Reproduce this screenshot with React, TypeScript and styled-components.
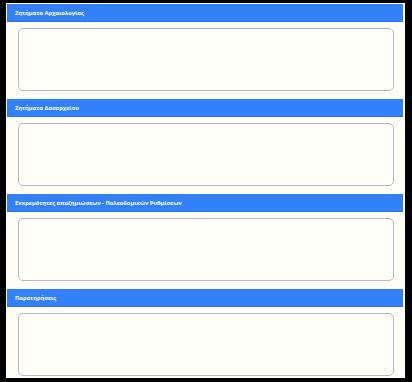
import styled, { createGlobalStyle } from "styled-components";

const GlobalStyle = createGlobalStyle`
  html, body {
    margin: 0;
    padding: 0;
    background: #000;
  }
  body {
    font-family: "Open Sans", "Noto Sans", sans-serif;
  }
`;

const sections = [
  "Ζητήματα Αρχαιολογίας",
  "Ζητήματα Δασαρχείου",
  "Εκκρεμότητες αποζημιώσεων - Πολεοδομικών Ρυθμίσεων",
  "Παρατηρήσεις",
];

const App = () => {
  return (
    <>
      <GlobalStyle />
      <Frame>
        <Page>
          {sections.map((title) => (
            <Section key={title}>
              <Header>{title}</Header>
              <Field>
                <TextBox />
              </Field>
            </Section>
          ))}
        </Page>
      </Frame>
    </>
  );
};

const Frame = styled.div`
  width: 412px;
  height: 382px;
  background: #000;
  padding: 3px 7px 4px 6px;
  box-sizing: border-box;
  overflow: hidden;
`;

const Page = styled.div`
  height: 100%;
  background: #fffff7;
  padding: 1px 2px 0 1px;
  box-sizing: border-box;
  display: flex;
  flex-direction: column;
`;

const Section = styled.div`
  display: flex;
  flex-direction: column;
`;

const Header = styled.div`
  height: 18px;
  background: #3380fb;
  color: #fff;
  font-size: 5.7px;
  font-weight: 700;
  display: flex;
  align-items: center;
  padding: 1px 0 0 8px;
  border-bottom: 1px solid #2f74e6;
  box-sizing: border-box;
`;

const Field = styled.div`
  padding: 6px 9px 8px 11px;
`;

const TextBox = styled.textarea`
  display: block;
  width: 100%;
  height: 63px;
  box-sizing: border-box;
  border: 1px solid #b9b8c9;
  border-radius: 5px;
  background: #fffff7;
  resize: none;
  outline: none;
  margin: 0;
`;

export default App;
